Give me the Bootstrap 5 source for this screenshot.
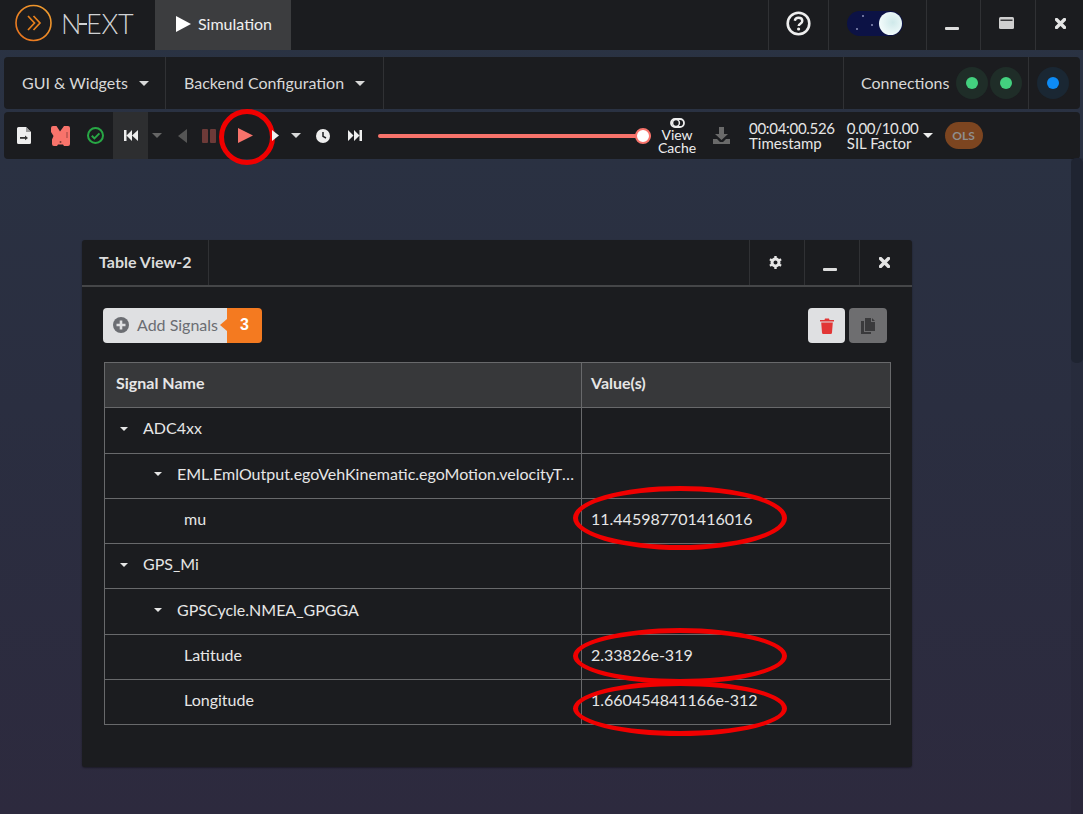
<!DOCTYPE html>
<html lang="en">
<head>
  <meta charset="UTF-8" />
  <meta name="viewport" content="width=device-width, initial-scale=1.0"/>
  <title>Simulation</title>
  <link href="https://cdn.jsdelivr.net/npm/bootstrap@5.3.3/dist/css/bootstrap.min.css" rel="stylesheet" />
  <style>
    html, body { height: 100%; }
    body {
      font-family: Lato, "Liberation Sans", sans-serif;
      font-size: 16px;
      color: #e6e6e6;
      overflow: hidden;
      background: linear-gradient(180deg, #2a3343 0%, #2a2e40 50%, #2d2a3e 100%);
    }
    svg { display: block; }
    .page { height: 814px; display: flex; flex-direction: column; position: relative; }

    /* title bar */
    .topbar { height: 50px; background: #1b1c1f; display: flex; flex-shrink: 0; }
    .logo-box { width: 155px; display: flex; align-items: center; padding: 0 0 4px 15px; gap: 9px; }
    .logo-word { display: flex; align-items: center; font-weight: 300; font-size: 27px; line-height: 1; color: #d0d2d4; letter-spacing: -.3px; }
    .logo-dash { width: 8px; height: 2px; background: #d0d2d4; margin: 1px -1px 0 -2px; }
    .sim-tab { width: 136px; background: #3c3d3f; display: flex; align-items: center; padding: 0 0 3px 21px; gap: 7px; color: #f0f0f0; }
    .top-cell { display: flex; align-items: center; justify-content: center; border-left: 1px solid #303134; height: 100%; padding-bottom: 4px; }
    .w-help { width: 60px; }
    .w-moon { width: 98px; padding-right: 6px; }
    .w-min { width: 54px; padding-right: 4px; }
    .w-max { width: 55px; padding-right: 4px; }
    .w-x { width: 48px; padding-left: 2px; }
    .moon-toggle { width: 56px; height: 25px; border-radius: 13px; background: #0c1245; position: relative; }
    .moon-ball { position: absolute; right: 1px; top: 1px; width: 23px; height: 23px; border-radius: 50%; background: radial-gradient(circle at 60% 45%, #cfe9ea, #f2fbfb 70%); }
    .star { position: absolute; width: 2px; height: 2px; border-radius: 50%; background: #8b90b8; }

    /* panels */
    .panel-bar { margin: 0 3px 0 4px; background: #1b1c1f; border-radius: 4px; display: flex; align-items: center; }
    .menu-bar { height: 52px; margin-top: 7px; }
    .menu-item { height: 100%; display: flex; align-items: center; border-right: 1px solid #303134; gap: 11px; padding-left: 18px; color: #d8d8d8; white-space: nowrap; }
    .m-gui { width: 162px; }
    .m-back { width: 218px; }
    .caret-down { width: 0; height: 0; border-left: 5px solid transparent; border-right: 5px solid transparent; border-top: 5px solid #d8d8d8; flex-shrink: 0; }
    .conn-box { height: 100%; display: flex; align-items: center; border-left: 1px solid #303134; padding-left: 17px; width: 185px; color: #d8d8d8; }
    .conn-label { margin-right: 7px; }
    .conn-end { height: 100%; width: 52px; display: flex; align-items: center; padding-left: 8px; border-left: 1px solid #303134; }
    .halo { width: 32px; height: 32px; border-radius: 50%; display: flex; align-items: center; justify-content: center; background: #1f2d28; }
    .halo span { width: 12px; height: 12px; border-radius: 50%; background: #43d17f; }
    .halo + .halo { margin-left: 2px; }
    .halo-blue { background: #1a2733; }
    .halo-blue span { background: #0d8bf5; }

    .tool-bar { height: 47px; margin-top: 3px; }
    .tool { height: 100%; flex-shrink: 0; display: flex; align-items: center; justify-content: center; position: relative; }
    .t-18 { width: 18px; } .t-22 { width: 22px; } .t-10 { width: 10px; }
    .t-32 { width: 32px; } .t-35 { width: 35px; } .t-39 { width: 39px; }
    .t-42 { width: 42px; } .t-50 { width: 50px; }
    .tool-on { width: 35px; background: #2d2e30; }
    .play-ring { position: absolute; left: -1px; top: -3px; width: 56px; height: 56px; border: 5px solid #f00000; border-radius: 50%; }
    .caret-mute { border-top-color: #666; }
    .caret-lite { border-top-color: #eee; }
    .slide-track { width: 273px; height: 4px; background: #f8736b; border-radius: 2px; position: relative; margin-left: 2px; flex-shrink: 0; }
    .slide-thumb { position: absolute; right: 0; top: -6px; width: 16px; height: 16px; border-radius: 50%; background: #fff; border: 2px solid #f8736b; }
    .view-cache { width: 46px; margin-left: 3px; font-size: 14px; line-height: 13px; text-align: center; color: #eee; flex-shrink: 0; display: flex; flex-direction: column; align-items: center; }
    .stat { font-size: 15px; line-height: 14.5px; color: #e6e6e6; flex-shrink: 0; white-space: nowrap; }
    .stat-num { letter-spacing: -.3px; }
    .stat-a { margin-left: 7px; }
    .stat-b { margin-left: 12px; }
    .stat-caret { margin-left: 4px; }
    .ols-pill { width: 38px; height: 27px; margin-left: 12px; border-radius: 14px; background: #7c4520; color: #8f8f8f; font-size: 12px; font-weight: 700; display: flex; align-items: center; justify-content: center; }

    /* floating window */
    .tv-window { width: 830px; height: 527px; margin: 81px 0 0 82px; background: #1b1c1f; border-radius: 3px; box-shadow: 0 1px 2px #0006; }
    .tv-head { height: 47px; border-bottom: 2px solid #454648; display: flex; }
    .tv-title { width: 127px; padding: 0 0 2px 17px; font-weight: 700; font-size: 16px; display: flex; align-items: center; border-right: 1px solid #303134; color: #dcdcdc; white-space: nowrap; }
    .tv-cell { width: 55px; height: 100%; display: flex; align-items: center; justify-content: center; border-left: 1px solid #303134; padding-right: 4px; }
    .tv-close { width: 53px; }
    .tv-min-i { margin-top: 6px; }
    .tv-body { padding: 21px 22px 0 21px; position: relative; }
    .add-group { height: 35px; display: inline-flex; border-radius: 4px; overflow: hidden; }
    .add-main { width: 124px; background: #dfe0e2; color: #6b6d72; padding: 0 0 2px 10px; gap: 8px; display: flex; align-items: center; font-size: 16px; white-space: nowrap; }
    .add-count { width: 35px; background: #f47a20; color: #fff; font-family: "Liberation Sans", sans-serif; font-weight: 700; font-size: 16px; padding-bottom: 2px; display: flex; align-items: center; justify-content: center; position: relative; }
    .add-count::before { content: ""; position: absolute; left: -7px; top: 11px; border-top: 6px solid transparent; border-bottom: 6px solid transparent; border-right: 7px solid #f47a20; }
    .act-btns { margin-right: 3px; }
    .icon-btn { width: 37px; height: 35px; border-radius: 4px; display: flex; align-items: center; justify-content: center; }
    .btn-light-i { background: #dfe0e2; }
    .btn-dark-i { background: #6e6e70; width: 38px; }

    .sig-table { width: 787px; table-layout: fixed; margin: 19px 0 0 1px; border-collapse: collapse; color: #e6e6e6; }
    .sig-table th, .sig-table td { border: 1px solid #68696b; height: 45.3px; padding: 0 11px 4px; vertical-align: middle; background: #1b1c1f; color: #e6e6e6; box-shadow: none; font-weight: 400; }
    .sig-table th { background: #37383a; font-weight: 700; }
    .sig-table th:last-child, .sig-table td:last-child { padding-left: 9px; }
    .col-name { width: 477px; }
    .sig-table .tree-1 { padding-left: 15px; }
    .sig-table .tree-2 { padding-left: 49px; padding-right: 6px; }
    .sig-table .tree-3 { padding-left: 79px; }
    .tw { display: inline-block; width: 0; height: 0; border-left: 4.5px solid transparent; border-right: 4.5px solid transparent; border-top: 4.5px solid #e6e6e6; margin: 0 15px 3px 0; vertical-align: middle; }
    .red-oval { position: absolute; left: 491px; width: 214px; border: 5px solid #f00000; border-radius: 50%; }
    .oval-a { top: 199px; height: 64px; }
    .oval-b { top: 341px; height: 56px; }
    .oval-c { top: 394px; height: 55px; }
    .side-track { position: absolute; right: 0; top: 158px; bottom: 0; width: 12px; background: #00000010; }
    .side-thumb { height: 205px; background: #1f2431; border-radius: 5px; }
  </style>
</head>
<body>
<div class="page">

  <!-- title bar -->
  <div class="topbar">
    <div class="logo-box">
      <svg width="37" height="38" viewBox="0 0 37 38">
        <defs><linearGradient id="lg" x1="0" y1="1" x2="1" y2="0"><stop offset="0" stop-color="#e8701c"/><stop offset="1" stop-color="#f0a030"/></linearGradient></defs>
        <circle cx="18.5" cy="19" r="17.5" fill="none" stroke="url(#lg)" stroke-width="1.6"/>
        <path d="M13 12l6.5 7-6.5 7M18.500 12l6.500 7-6.500 7" fill="none" stroke="#e8801c" stroke-width="1.7"/>
      </svg>
      <div class="logo-word"><span>N</span><i class="logo-dash"></i><span>EXT</span></div>
    </div>
    <div class="sim-tab">
      <svg width="15" height="16" viewBox="0 0 15 16"><path d="M0 0l15 8-15 8z" fill="#fff"/></svg>
      <span>Simulation</span>
    </div>
    <div class="ms-auto d-flex h-100">
      <div class="top-cell w-help">
        <svg width="25" height="25" viewBox="0 0 25 25"><circle cx="12.500" cy="12.500" r="10.800" fill="none" stroke="#eee" stroke-width="2.600"/><path d="M8.800 9.800c.3-2 1.800-3 3.700-3 2.100 0 3.800 1.200 3.800 3.100 0 2.800-3.600 2.700-3.600 5" fill="none" stroke="#eee" stroke-width="2.400"/><circle cx="12.600" cy="18" r="1.600" fill="#eee"/></svg>
      </div>
      <div class="top-cell w-moon">
        <div class="moon-toggle">
          <span class="star" style="left:15px;top:4px"></span>
          <span class="star" style="left:9px;top:17px"></span>
          <span class="star" style="left:24px;top:13px"></span>
          <span class="moon-ball"></span>
        </div>
      </div>
      <div class="top-cell w-min"><svg width="14" height="14" viewBox="0 0 14 14"><rect y="11" width="14" height="3" rx="1" fill="#ddd"/></svg></div>
      <div class="top-cell w-max"><svg width="15" height="12" viewBox="0 0 15 12"><rect width="15" height="12" rx="1.500" fill="#cfcfcf"/><rect x="1.500" y="2.500" width="12" height="1.500" fill="#3a3a3c"/></svg></div>
      <div class="top-cell w-x"><svg width="11" height="11" viewBox="0 0 11 11"><path d="M1.500 1.500l8 8M9.500 1.500l-8 8" stroke="#e4e4e4" stroke-width="3.400" stroke-linecap="round"/></svg></div>
    </div>
  </div>

  <!-- menu bar -->
  <div class="panel-bar menu-bar">
    <div class="menu-item m-gui"><span>GUI &amp; Widgets</span><span class="caret-down"></span></div>
    <div class="menu-item m-back"><span>Backend Configuration</span><span class="caret-down"></span></div>
    <div class="ms-auto d-flex h-100">
      <div class="conn-box">
        <span class="conn-label">Connections</span>
        <div class="halo"><span></span></div>
        <div class="halo"><span></span></div>
      </div>
      <div class="conn-end"><div class="halo halo-blue"><span></span></div></div>
    </div>
  </div>

  <!-- playback toolbar -->
  <div class="panel-bar tool-bar">
    <div class="tool t-39"><svg width="14" height="17" viewBox="0 0 14 17"><path d="M1.500 0H9l5 5v10.500A1.500 1.500 0 0 1 12.500 17h-11A1.500 1.500 0 0 1 0 15.500v-14A1.500 1.500 0 0 1 1.500 0z" fill="#eee"/><path d="M9 0v5h5z" fill="#999"/><rect x="3" y="10" width="5" height="1.800" fill="#333"/><path d="M8 8.500l3 2.400-3 2.400z" fill="#333"/></svg></div>
    <div class="tool t-35"><svg width="19" height="20" viewBox="0 0 19 20"><path d="M2 0h3.500L9 5.500 13 0h4a2 2 0 0 1 2 2v16a2 2 0 0 1-2 2h-4l-1-1.500H7L6 20H3a2 2 0 0 1-2-2v-4.500L2.500 10 0 6V2a2 2 0 0 1 2-2z" fill="#f8736b"/><circle cx="9.500" cy="16" r="1" fill="#7a3a36"/><rect x="15" y="6" width="2" height="6" fill="#c95c56"/></svg></div>
    <div class="tool t-35"><svg width="17" height="17" viewBox="0 0 17 17"><circle cx="8.500" cy="8.500" r="7.500" fill="none" stroke="#28a745" stroke-width="2"/><path d="M4.800 8.800l2.600 2.600 5-5" fill="none" stroke="#28a745" stroke-width="2"/></svg></div>
    <div class="tool tool-on"><svg width="14" height="11" viewBox="0 0 14 11"><path d="M0 0h2.500v11H0zM8 0v11L2.500 5.500zM14 0v11L8 5.500z" fill="#eee"/></svg></div>
    <div class="tool t-18"><span class="caret-down caret-mute"></span></div>
    <div class="tool t-32"><svg width="9" height="14" viewBox="0 0 9 14"><path d="M9 0v14L0 7z" fill="#555"/></svg></div>
    <div class="tool t-22"><svg width="14" height="14" viewBox="0 0 14 14"><rect width="6" height="14" rx="1" fill="#6d3a38"/><rect x="8" width="6" height="14" rx="1" fill="#6d3a38"/></svg></div>
    <div class="tool t-50"><svg width="15" height="15" viewBox="0 0 15 15"><path d="M0 0l15 7.500L0 15z" fill="#f8736b"/></svg><span class="play-ring"></span></div>
    <div class="tool t-10"><svg width="7" height="11" viewBox="0 0 7 11"><path d="M0 0l7 5.500L0 11z" fill="#eee"/></svg></div>
    <div class="tool t-32"><span class="caret-down"></span></div>
    <div class="tool t-22"><svg width="14" height="14" viewBox="0 0 14 14"><circle cx="7" cy="7" r="7" fill="#eee"/><path d="M7 3v4.300l3 1.700" fill="none" stroke="#1b1c1f" stroke-width="1.500"/></svg></div>
    <div class="tool t-42"><svg width="14" height="11" viewBox="0 0 14 11"><path d="M0 0v11l5.500-5.500zM6 0v11l5.500-5.500zM11.500 0H14v11h-2.500z" fill="#eee"/></svg></div>
    <div class="slide-track"><span class="slide-thumb"></span></div>
    <div class="view-cache">
      <svg width="15" height="10" viewBox="0 0 15 10"><rect x="1" y="1" width="13" height="8" rx="4" fill="none" stroke="#eee" stroke-width="1.800"/><circle cx="6" cy="5" r="3.400" fill="none" stroke="#eee" stroke-width="1.500"/></svg>
      <span>View</span><span>Cache</span>
    </div>
    <div class="tool t-42"><svg width="17" height="17" viewBox="0 0 17 17"><path d="M6 0h5v7h4l-6.500 6L2 7h4z" fill="#6a6a6a"/><path d="M0 12h4l3 3h3l3-3h4v5H0z" fill="#6a6a6a"/></svg></div>
    <div class="stat stat-a"><div class="stat-num">00:04:00.526</div><div>Timestamp</div></div>
    <div class="stat stat-b"><div class="stat-num">0.00/10.00</div><div>SIL Factor</div></div>
    <span class="caret-down caret-lite stat-caret"></span>
    <div class="ols-pill">OLS</div>
  </div>

  <!-- floating window -->
  <div class="tv-window">
    <div class="tv-head">
      <div class="tv-title">Table View-2</div>
      <div class="ms-auto d-flex h-100">
        <div class="tv-cell"><svg width="13" height="13" viewBox="0 0 13 13"><circle cx="6.500" cy="6.500" r="3.500" fill="none" stroke="#e6e6e6" stroke-width="3"/><path d="M6.500 0v2.500M6.500 10.500V13M.9 3.200l2.200 1.300M9.900 8.500l2.200 1.300M.9 9.800l2.200-1.300M9.900 4.500l2.200-1.300" stroke="#e6e6e6" stroke-width="2.400"/></svg></div>
        <div class="tv-cell"><svg class="tv-min-i" width="14" height="14" viewBox="0 0 14 14"><rect y="9" width="14" height="3" rx="1" fill="#ddd"/></svg></div>
        <div class="tv-cell tv-close"><svg width="11" height="11" viewBox="0 0 11 11"><path d="M1.500 1.500l8 8M9.500 1.500l-8 8" stroke="#e4e4e4" stroke-width="3.400" stroke-linecap="round"/></svg></div>
      </div>
    </div>
    <div class="tv-body">
      <div class="d-flex">
        <div class="add-group">
          <div class="add-main">
            <svg width="16" height="16" viewBox="0 0 16 16"><circle cx="8" cy="8" r="8" fill="#6b6d72"/><path d="M8 3.500v9M3.500 8h9" stroke="#dfe0e2" stroke-width="2.600"/></svg>
            <span>Add Signals</span>
          </div>
          <div class="add-count">3</div>
        </div>
        <div class="ms-auto d-flex gap-1 act-btns">
          <div class="icon-btn btn-light-i"><svg width="14" height="16" viewBox="0 0 14 16"><path d="M0 2h4.500l.5-1.500h4L9.500 2H14v1.500H0z" fill="#e23636"/><path d="M1.200 4.500h11.600l-.8 10a1.500 1.500 0 0 1-1.500 1.500h-7.500A1.500 1.500 0 0 1 2 14.500z" fill="#e23636"/></svg></div>
          <div class="icon-btn btn-dark-i"><svg width="14" height="16" viewBox="0 0 14 16"><path d="M4 0h6v4h4v9H4z" fill="#3a3a3c"/><path d="M11 0l3 3h-3z" fill="#3a3a3c"/><path d="M0 3h3v11h7v2H0z" fill="#3a3a3c"/></svg></div>
        </div>
      </div>

      <table class="table sig-table mb-0">
        <thead>
          <tr><th class="col-name">Signal Name</th><th>Value(s)</th></tr>
        </thead>
        <tbody>
          <tr><td class="tree-1"><i class="tw"></i>ADC4xx</td><td></td></tr>
          <tr><td class="tree-2 text-truncate"><i class="tw"></i>EML.EmlOutput.egoVehKinematic.egoMotion.velocityTimestamp</td><td></td></tr>
          <tr><td class="tree-3">mu</td><td>11.445987701416016</td></tr>
          <tr><td class="tree-1"><i class="tw"></i>GPS_Mi</td><td></td></tr>
          <tr><td class="tree-2"><i class="tw"></i>GPSCycle.NMEA_GPGGA</td><td></td></tr>
          <tr><td class="tree-3">Latitude</td><td>2.33826e-319</td></tr>
          <tr><td class="tree-3">Longitude</td><td>1.660454841166e-312</td></tr>
        </tbody>
      </table>

      <span class="red-oval oval-a"></span>
      <span class="red-oval oval-b"></span>
      <span class="red-oval oval-c"></span>
    </div>
  </div>

  <div class="side-track"><div class="side-thumb"></div></div>
</div>
<script src="https://cdn.jsdelivr.net/npm/bootstrap@5.3.3/dist/js/bootstrap.bundle.min.js"></script>
</body>
</html>
